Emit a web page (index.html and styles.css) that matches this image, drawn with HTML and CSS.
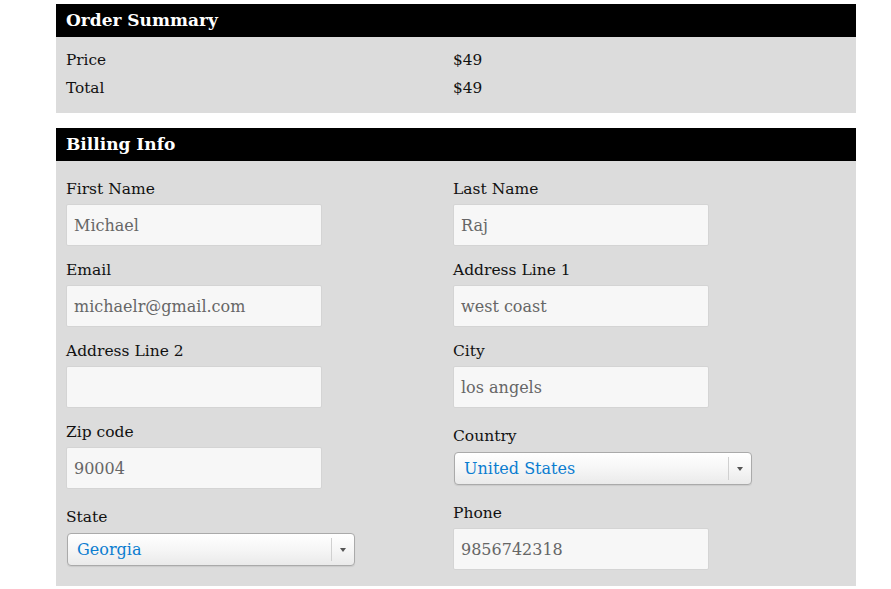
FILE: index.html
```html
<!DOCTYPE html>
<html>
<head>
<meta charset="utf-8">
<link rel="stylesheet" href="styles.css">
</head>
<body>
<div class="page">
  <section class="panel">
    <h2 class="panel-title">Order Summary</h2>
    <div class="summary">
      <div class="summary-row"><span class="summary-label">Price</span><span>$49</span></div>
      <div class="summary-row"><span class="summary-label">Total</span><span>$49</span></div>
    </div>
  </section>
  <section class="panel panel-billing">
    <h2 class="panel-title">Billing Info</h2>
    <div class="billing">
      <div class="col col-left">
        <div class="field"><label class="field-label">First Name</label><div class="input">Michael</div></div>
        <div class="field"><label class="field-label">Email</label><div class="input">michaelr@gmail.com</div></div>
        <div class="field"><label class="field-label">Address Line 2</label><div class="input"></div></div>
        <div class="field"><label class="field-label">Zip code</label><div class="input">90004</div></div>
        <div class="field field-select"><label class="field-label">State</label>
          <div class="select select-state"><span class="select-text">Georgia</span><span class="select-arrow"></span></div>
        </div>
      </div>
      <div class="col col-right">
        <div class="field"><label class="field-label">Last Name</label><div class="input">Raj</div></div>
        <div class="field"><label class="field-label">Address Line 1</label><div class="input">west coast</div></div>
        <div class="field"><label class="field-label">City</label><div class="input">los angels</div></div>
        <div class="field field-select"><label class="field-label">Country</label>
          <div class="select select-country"><span class="select-text">United States</span><span class="select-arrow"></span></div>
        </div>
        <div class="field"><label class="field-label">Phone</label><div class="input">9856742318</div></div>
      </div>
    </div>
  </section>
</div>
</body>
</html>
```
FILE: styles.css
```css
html, body {
  margin: 0;
  padding: 0;
  background: #fff;
}
body {
  font-family: "DejaVu Serif", "Liberation Serif", serif;
  color: #111;
}
.page {
  width: 800px;
  margin-left: 56px;
  padding-top: 4px;
}
.panel-title {
  margin: 0;
  height: 33px;
  line-height: 33px;
  background: #000;
  color: #fff;
  font-size: 17px;
  font-weight: bold;
  padding-left: 10px;
}
.panel-billing {
  margin-top: 15px;
}
.summary {
  background: #dcdcdc;
  padding: 9px 10px 11px;
  font-size: 15.3px;
}
.summary-row {
  display: flex;
  line-height: 28px;
  height: 28px;
}
.summary-label {
  width: 387px;
}
.billing {
  background: #dcdcdc;
  padding: 18px 10px 16px;
  display: flex;
}
.col-left {
  width: 387px;
}
.col-right {
  flex: 1;
}
.field {
  margin-bottom: 14px;
}
.field:last-child {
  margin-bottom: 0;
}
.field-label {
  display: block;
  font-size: 15.5px;
  line-height: 20px;
  height: 20px;
  margin-bottom: 5px;
}
.input {
  box-sizing: border-box;
  width: 256px;
  height: 42px;
  line-height: 41px;
  background: #f7f7f7;
  border: 1px solid #d4d4d4;
  border-radius: 2px;
  padding-left: 7px;
  font-size: 16px;
  color: #666;
}
.field-select {
  padding-top: 4px;
  margin-bottom: 18px;
}
.field-select .field-label {
  margin-bottom: 6px;
}
.select {
  box-sizing: border-box;
  position: relative;
  height: 33px;
  line-height: 31px;
  border: 1px solid #aaa;
  border-radius: 4px;
  background: linear-gradient(#ffffff 0%, #f6f6f6 50%, #eaeaea 100%);
  box-shadow: 0 1px 1px rgba(0,0,0,0.08);
  font-size: 16px;
  color: #0b7dd0;
  padding-left: 9px;
}
.select-state {
  width: 288px;
  margin-left: 1px;
}
.select-country {
  width: 298px;
  margin-left: 1px;
}
.select-arrow {
  position: absolute;
  right: 0;
  top: 4px;
  width: 22px;
  height: 23px;
  border-left: 1px solid #d0d0d0;
}
.select-arrow::after {
  content: "";
  position: absolute;
  left: 8px;
  top: 10px;
  border-left: 3px solid transparent;
  border-right: 3px solid transparent;
  border-top: 4px solid #555;
}
```
